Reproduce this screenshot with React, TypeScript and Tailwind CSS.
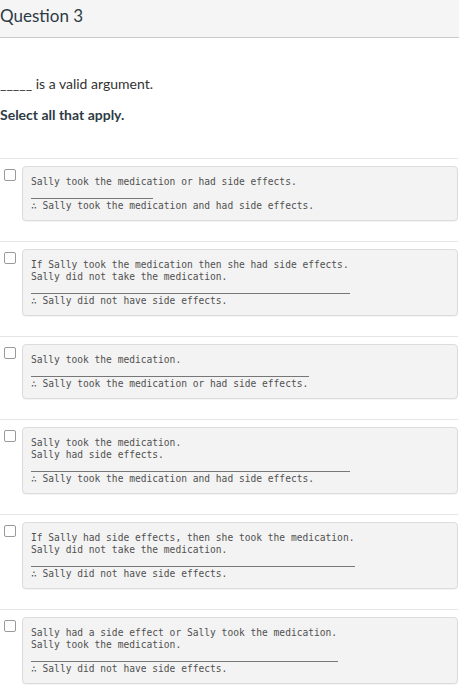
import React from "react";

type Choice = {
  premises: string[];
  conclusion: string;
  rule: number;
};

const choices: Choice[] = [
  {
    premises: ["Sally took the medication or had side effects."],
    conclusion: "Sally took the medication and had side effects.",
    rule: 122,
  },
  {
    premises: [
      "If Sally took the medication then she had side effects.",
      "Sally did not take the medication.",
    ],
    conclusion: "Sally did not have side effects.",
    rule: 319,
  },
  {
    premises: ["Sally took the medication."],
    conclusion: "Sally took the medication or had side effects.",
    rule: 278,
  },
  {
    premises: ["Sally took the medication.", "Sally had side effects."],
    conclusion: "Sally took the medication and had side effects.",
    rule: 319,
  },
  {
    premises: [
      "If Sally had side effects, then she took the medication.",
      "Sally did not take the medication.",
    ],
    conclusion: "Sally did not have side effects.",
    rule: 324,
  },
  {
    premises: [
      "Sally had a side effect or Sally took the medication.",
      "Sally took the medication.",
    ],
    conclusion: "Sally did not have side effects.",
    rule: 307,
  },
];

const Answer = ({ c }: { c: Choice }) => (
  <div className="border-t border-[#e6e6e6] w-[458px] pt-[7px] pb-[20px] flex items-start">
    <div className="w-[22px] shrink-0 pt-[3px] pl-[4px]">
      <div className="w-[12px] h-[12px] rounded-[2px] border border-[#999] bg-white" />
    </div>
    <div className="flex-1 rounded-[4px] border border-[#dcdcdc] bg-[#f3f3f3] shadow-[0_1px_1px_rgba(0,0,0,0.05)] pl-[8px] pt-[9px] pb-[8px] font-['DejaVu_Sans_Mono',monospace] text-[9.6px] leading-[12px] text-[#505050] whitespace-pre">
      {c.premises.map((p) => (
        <div key={p}>{p}</div>
      ))}
      <div className="mt-[10px] mb-[1px] border-t border-[#777]" style={{ width: c.rule }} />
      <div>{"∴ " + c.conclusion}</div>
    </div>
  </div>
);

const App = () => {
  return (
    <div className="w-[459px] min-h-[700px] bg-white font-['Lato',sans-serif] overflow-hidden">
      <div className="h-[38px] bg-[#f5f5f5] border-b border-[#c8cbce] pt-[6px]">
        <h2 className="text-[17px] text-[#2d3b45] leading-[20px]">Question 3</h2>
      </div>
      <div className="pt-[38px]">
        <p className="text-[14px] text-[#333] leading-[16px]">_____ is a valid argument.</p>
        <p className="mt-[15px] text-[14px] font-bold text-[#2d3b45] leading-[16px]">
          Select all that apply.
        </p>
      </div>
      <div className="mt-[35px]">
        {choices.map((c, i) => (
          <Answer key={i} c={c} />
        ))}
      </div>
    </div>
  );
};

export default App;
